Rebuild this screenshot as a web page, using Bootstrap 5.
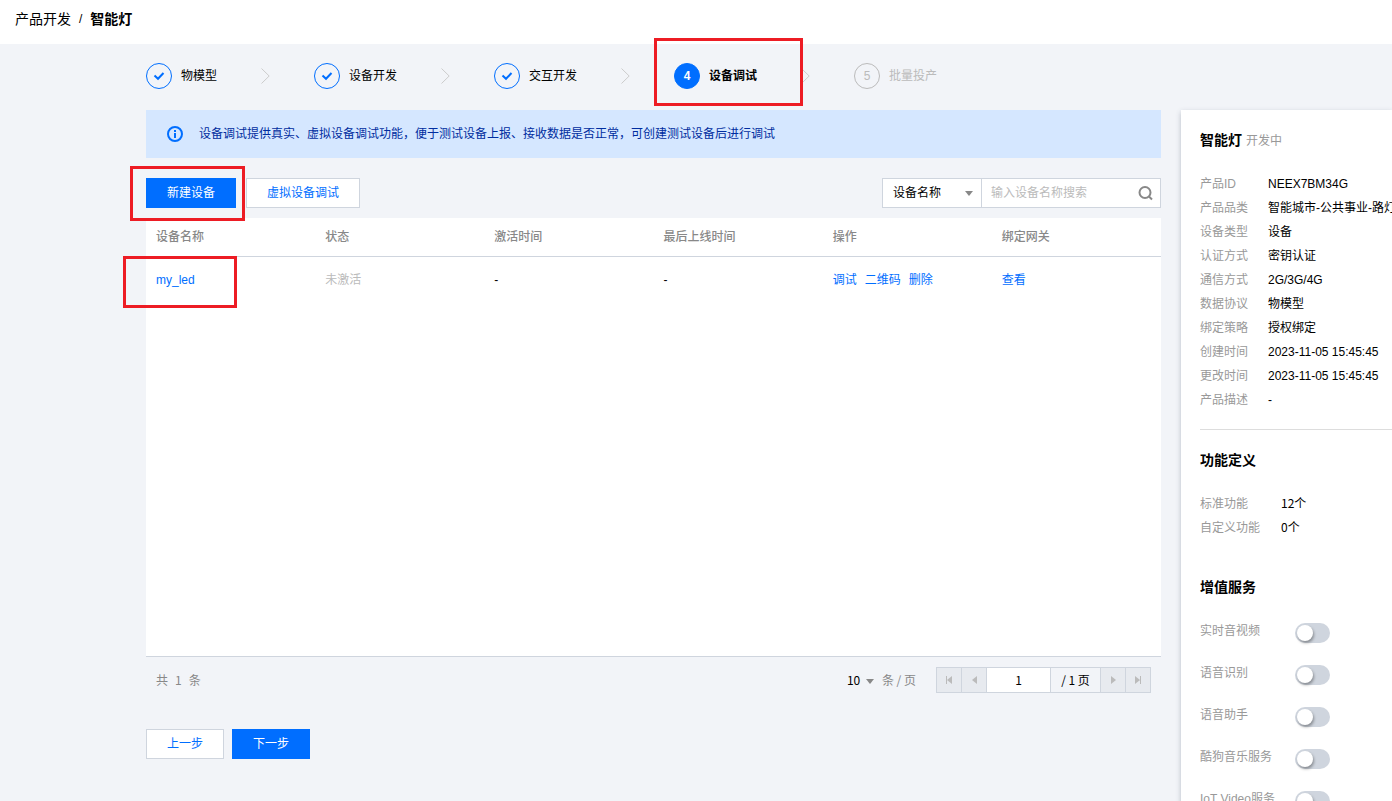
<!DOCTYPE html>
<html lang="zh-CN">
<head>
<meta charset="utf-8">
<meta name="viewport" content="width=device-width, initial-scale=1">
<title>智能灯 - 设备调试</title>
<link href="https://cdn.jsdelivr.net/npm/bootstrap@5.3.0/dist/css/bootstrap.min.css" rel="stylesheet">
<style>
:root{--blue:#006eff;--line:#cfd5de;--red:#ed1c24;--gray:#999}
body{font-family:"Liberation Sans","Noto Sans CJK SC",sans-serif;font-size:12px;line-height:18px;color:#000;background:#f2f4f8}
.cjk{font-family:"Noto Sans CJK SC",sans-serif}
a{color:var(--blue);text-decoration:none}
.topbar{height:44px;padding:9px 15px 0;font-size:14px;line-height:20px;background:#fff}
.topbar .sep{font-size:12px}
.workspace{padding-left:146px}
.steps{padding:19px 0 21px;gap:44px}
.step{gap:9px}
.dot{width:26px;height:26px;border:1px solid var(--blue);border-radius:50%;color:var(--blue)}
.dot.now{background:var(--blue);color:#fff}
.dot.todo{border-color:#bbb;color:#bbb}
.waiting{color:#bbb}
.marked{position:relative}
.marked::after{content:"";position:absolute;border:3px solid var(--red);pointer-events:none;z-index:2}
.mark-step::after{inset:-25px -46px -17px -20px}
.mark-new::after{inset:-12px -9px -13px -16px}
.mark-row::after{inset:-1px 78px -4px -23px}
.tip{height:48px;padding:0 21px;background:#d5e7ff;gap:16px}
.tip p{color:#002da0}
.toolbar{padding:20px 0 10px}
.actions{gap:10px}
.flat{height:30px;padding:0 20px;border-radius:0;font-size:12px;line-height:27px;border:1px solid var(--blue);background:var(--blue);color:#fff}
.flat.hollow{background:#fff;border-color:var(--line);color:var(--blue)}
.flat:hover{background:#0063e6;color:#fff}
.finder{width:279px;height:30px;background:#fff;border:1px solid var(--line)}
.finder select{width:99px;border:0;border-right:1px solid var(--line);padding:0 10px}
.pick{appearance:none;color:#000;border:0;background:transparent url("data:image/svg+xml,%3Csvg xmlns='http://www.w3.org/2000/svg' width='8' height='5'%3E%3Cpath d='M0 0h8L4 5z' fill='%23888'/%3E%3C/svg%3E") no-repeat right 8px center}
.finder input{border:0;min-width:0;padding:0 9px;outline:0}
.finder input::placeholder{color:#bbb}
.finder button{border:0;background:none;width:32px;padding:0}
.grid-card{height:439px;background:#fff;border-bottom:1px solid var(--line)}
.devices{table-layout:fixed;width:100%}
.devices th,.devices td{padding:0 10px;font-weight:400}
.devices th{height:38px;color:#888;font-weight:500}
.devices thead tr{border-bottom:1px solid var(--line)}
.devices td{height:48px}
.ops{gap:8px}
.pager-row{padding:10px 10px 0;color:#888}
.total{gap:7px}
.sizer{width:35px;padding:0;background-position:right 8px top 8px}
.per-page{margin-right:20px}
.pager{height:26px;border:1px solid var(--line)}
.pager>*{border:0;border-right:1px solid var(--line)}
.pager>:last-child{border-right:0;width:24px}
.pager button{width:25px;padding:0;background:#e7eaef}
.pager>button:last-child{width:24px}
.pager input{width:64px;text-align:center;padding:0;background:#fff;color:#000}
.pager span{width:50px;text-align:center;color:#000;line-height:24px}
.finish{padding-top:36px}
.side{width:211px;margin-left:20px;margin-top:66px;padding:20px 0 0 19px;background:#fff;box-shadow:0 2px 5px rgba(54,65,90,.3)}
.side h2{font-size:14px;line-height:20px;font-weight:700;margin:0}
.side h2 small{font-size:12px}
.side h2.services{margin:38px 0 25px}
.facts{display:grid;grid-template-columns:68px 1fr;line-height:24px;margin:21px 0 0;white-space:nowrap}
.facts.wide{grid-template-columns:81px 1fr}
.facts dt,.soft{color:var(--gray);font-weight:400}
.facts dd{margin:0}
.side hr{margin:17px 0 20px;border:0;border-top:1px solid #ddd;opacity:1}
.service{height:42px;color:var(--gray)}
.service label{width:95px}
.toggle{appearance:none;width:35px;height:20px;border-radius:10px;background:#cfd5de;padding:2px;margin:1px 0 0;display:block}
.toggle::before{content:"";display:block;width:16px;height:16px;border-radius:50%;background:#fff;box-shadow:1px 2px 3px rgba(0,0,0,.35)}
.toggle:checked{background:var(--blue)}
.toggle:checked::before{margin-left:15px}
</style>
</head>
<body>
<svg class="d-none" xmlns="http://www.w3.org/2000/svg">
  <symbol id="tick" viewBox="0 0 12 10"><path d="M1.5 4.5 5 7.8 10.5 2" fill="none" stroke="currentColor" stroke-width="2"/></symbol>
  <symbol id="next" viewBox="0 0 9 16"><path d="M.5.5 8.2 8 .5 15.5" fill="none" stroke="#ccc"/></symbol>
</svg>
<div class="vh-100 overflow-hidden d-flex flex-column">
  <header class="topbar d-flex gap-2 flex-shrink-0">
    <a href="#" class="text-black">产品开发</a><span class="sep">/</span><strong>智能灯</strong>
  </header>
  <div class="workspace d-flex flex-grow-1">
    <main class="flex-grow-1">
      <nav class="steps d-flex align-items-center" aria-label="步骤">
        <div class="step d-flex align-items-center"><span class="dot d-flex align-items-center justify-content-center"><svg width="12" height="10"><use href="#tick"/></svg></span>物模型</div>
        <svg width="9" height="16"><use href="#next"/></svg>
        <div class="step d-flex align-items-center"><span class="dot d-flex align-items-center justify-content-center"><svg width="12" height="10"><use href="#tick"/></svg></span>设备开发</div>
        <svg width="9" height="16"><use href="#next"/></svg>
        <div class="step d-flex align-items-center"><span class="dot d-flex align-items-center justify-content-center"><svg width="12" height="10"><use href="#tick"/></svg></span>交互开发</div>
        <svg width="9" height="16"><use href="#next"/></svg>
        <div class="step marked mark-step d-flex align-items-center fw-bold"><span class="dot now d-flex align-items-center justify-content-center">4</span>设备调试</div>
        <svg width="9" height="16"><use href="#next"/></svg>
        <div class="step waiting d-flex align-items-center"><span class="dot todo d-flex align-items-center justify-content-center">5</span>批量投产</div>
      </nav>

      <div class="tip d-flex align-items-center">
        <svg width="16" height="16" viewBox="0 0 16 16"><circle cx="8" cy="8" r="7" fill="none" stroke="#006eff" stroke-width="2"/><path d="M7 4h2v2H7zM7 7h2v5H7z" fill="#006eff"/></svg>
        <p class="m-0">设备调试提供真实、虚拟设备调试功能，便于测试设备上报、接收数据是否正常，可创建测试设备后进行调试</p>
      </div>

      <div class="toolbar d-flex justify-content-between">
        <div class="actions d-flex">
          <div class="marked mark-new"><button type="button" class="btn flat d-block">新建设备</button></div>
          <button type="button" class="btn flat hollow">虚拟设备调试</button>
        </div>
        <form class="finder d-flex">
          <select class="pick flex-shrink-0" aria-label="搜索字段"><option>设备名称</option></select>
          <input type="text" class="flex-grow-1" placeholder="输入设备名称搜索" aria-label="输入设备名称搜索">
          <button type="button" aria-label="搜索"><svg class="d-block mx-auto" width="18" height="16" viewBox="0 0 18 16" fill="none" stroke="#888" stroke-width="2"><circle cx="8" cy="7.5" r="5.5"/><path d="m12 11.5 3 3"/></svg></button>
        </form>
      </div>

      <div class="grid-card">
        <table class="devices">
          <thead><tr><th>设备名称</th><th>状态</th><th>激活时间</th><th>最后上线时间</th><th>操作</th><th>绑定网关</th></tr></thead>
          <tbody><tr>
            <td class="marked mark-row"><a href="#">my_led</a></td>
            <td class="waiting">未激活</td><td>-</td><td>-</td>
            <td><div class="ops d-flex"><a href="#">调试</a><a href="#">二维码</a><a href="#">删除</a></div></td>
            <td><a href="#">查看</a></td>
          </tr></tbody>
        </table>
      </div>

      <div class="pager-row cjk d-flex justify-content-between align-items-center">
        <div class="total d-flex"><span>共</span><span>1</span><span>条</span></div>
        <div class="d-flex align-items-center">
          <select class="pick sizer" id="size"><option>10</option></select>
          <label for="size" class="per-page">条 / 页</label>
          <div class="pager d-flex">
            <button type="button" aria-label="首页"><svg class="d-block mx-auto" width="8" height="8" fill="#bbb"><path d="M1 0h1v8H1zM7 0v8L2 4z"/></svg></button>
            <button type="button" aria-label="上一页"><svg class="d-block mx-auto" width="5" height="8" fill="#bbb"><path d="M5 0v8L0 4z"/></svg></button>
            <input type="text" value="1" aria-label="页码"><span>/ 1 页</span>
            <button type="button" aria-label="下一页"><svg class="d-block mx-auto" width="5" height="8" fill="#bbb"><path d="M0 0v8l5-4z"/></svg></button>
            <button type="button" aria-label="末页"><svg class="d-block mx-auto" width="8" height="8" fill="#bbb"><path d="M6 0h1v8H6zM1 0v8l5-4z"/></svg></button>
          </div>
        </div>
      </div>

      <div class="finish d-flex gap-2">
        <button type="button" class="btn flat hollow">上一步</button>
        <button type="button" class="btn flat">下一步</button>
      </div>
    </main>

    <aside class="side flex-shrink-0">
      <h2>智能灯 <small class="soft">开发中</small></h2>
      <dl class="facts">
        <dt>产品ID</dt><dd>NEEX7BM34G</dd>
        <dt>产品品类</dt><dd>智能城市-公共事业-路灯</dd>
        <dt>设备类型</dt><dd>设备</dd>
        <dt>认证方式</dt><dd>密钥认证</dd>
        <dt>通信方式</dt><dd>2G/3G/4G</dd>
        <dt>数据协议</dt><dd>物模型</dd>
        <dt>绑定策略</dt><dd>授权绑定</dd>
        <dt>创建时间</dt><dd>2023-11-05 15:45:45</dd>
        <dt>更改时间</dt><dd>2023-11-05 15:45:45</dd>
        <dt>产品描述</dt><dd>-</dd>
      </dl>
      <hr>
      <h2>功能定义</h2>
      <dl class="facts wide cjk">
        <dt>标准功能</dt><dd>12个</dd>
        <dt>自定义功能</dt><dd>0个</dd>
      </dl>
      <h2 class="services">增值服务</h2>
      <div class="service d-flex"><label for="s1">实时音视频</label><input class="toggle" type="checkbox" role="switch" id="s1"></div>
      <div class="service d-flex"><label for="s2">语音识别</label><input class="toggle" type="checkbox" role="switch" id="s2"></div>
      <div class="service d-flex"><label for="s3">语音助手</label><input class="toggle" type="checkbox" role="switch" id="s3"></div>
      <div class="service d-flex"><label for="s4">酷狗音乐服务</label><input class="toggle" type="checkbox" role="switch" id="s4"></div>
      <div class="service d-flex"><label for="s5">IoT Video服务</label><input class="toggle" type="checkbox" role="switch" id="s5"></div>
    </aside>
  </div>
</div>
<script src="https://cdn.jsdelivr.net/npm/bootstrap@5.3.0/dist/js/bootstrap.bundle.min.js"></script>
</body>
</html>
